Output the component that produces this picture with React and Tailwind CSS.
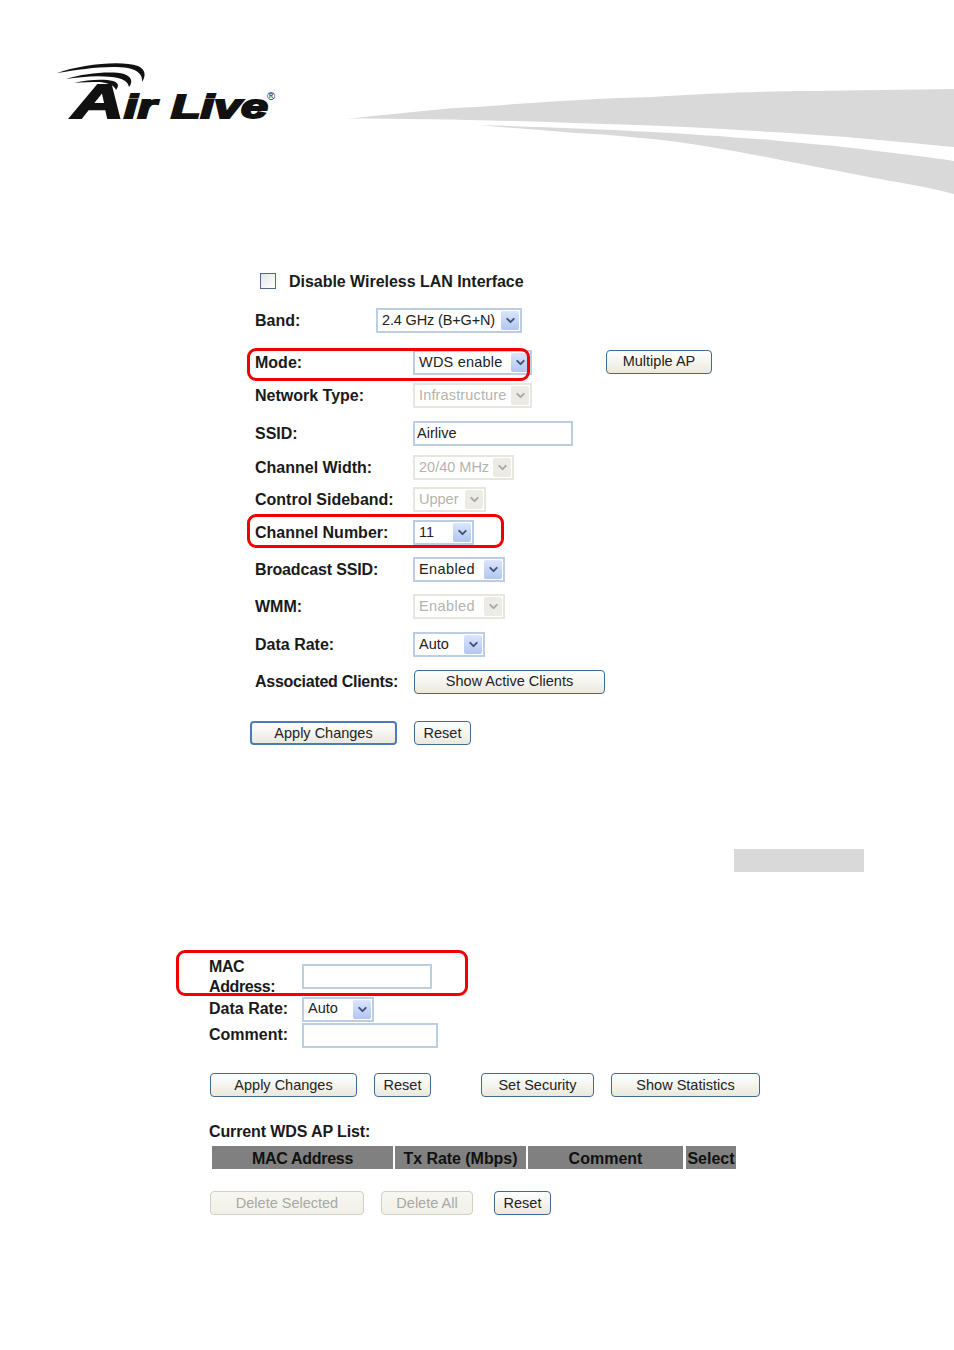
import { ChevronDown } from 'lucide-react';

const FONT = "font-['Liberation_Sans',Arial,sans-serif]";

function Logo() {
  return (
    <svg width="232" height="76" viewBox="52 60 232 76" className="ml-[52px] mt-[60px] shrink-0">
      {/* signal arcs */}
      <path d="M57 73 C 80 65 120 60 138 66 C 146 70 146 76 142 82 C 143 75 138 70 128 68 C 108 65 82 69 57 73 Z" fill="#111" />
      <path d="M66 79 C 85 73 112 71 124 74 C 132 77 133 82 129 87 C 128 81 122 78 112 77 C 96 75 80 77 66 79 Z" fill="#111" />
      <path d="M74 83 C 90 79 105 79 113 81 C 119 83 119 86 116 90 C 114 85 108 83 100 82 C 91 82 82 82 74 83 Z" fill="#111" />
      <text x="72" y="118" textLength="196" lengthAdjust="spacingAndGlyphs" fill="#111" stroke="#111" strokeWidth="2" fontFamily="Liberation Sans" fontWeight="700" fontStyle="italic">
        <tspan fontSize="49">A</tspan>
        <tspan fontSize="33">ir</tspan>
        <tspan fontSize="33" dx="10">Live</tspan>
      </text>
      <text x="267" y="100" fontSize="11" fill="#111" fontFamily="Liberation Sans">®</text>
    </svg>
  );
}

function Swoosh() {
  return (
    <svg width="607" height="110" viewBox="347 86 607 110" className="ml-[63px] mt-[86px] shrink-0">
      <path d="M347 118.500 C 400 114 440 108 477 107 C 540 102 600 98 653 97 C 710 93 770 91 810 91 L 954 89 L 954 147 C 880 140 830 135 771 132 C 700 127 640 125 575 123 C 500 120 420 119 347 118.500 Z" fill="#d9d9d9" />
      <path d="M480 125 C 540 127 600 129 653 132 C 690 134 730 137 771 140 C 800 143 840 146 869 150 C 900 154 930 157 954 161 L 954 194 C 925 186 895 182 869 177 C 835 170 800 164 771 158 C 730 150 690 143 653 139 C 620 136 600 134 575 133 C 540 130 510 128 480 125 Z" fill="#d9d9d9" />
    </svg>
  );
}

function Select({ value, width, disabled, textClass = '' }) {
  return (
    <div className={`${width} h-[25px] shrink-0 flex items-center justify-between pl-[4px] pr-px border-2 text-[14.500px] ${disabled ? 'border-[#e6e5de] text-[#b4b4ad]' : 'border-[#bccfe2] text-[#222]'}`}>
      <span className={`whitespace-nowrap ${textClass}`}>{value}</span>
      <span className={`w-[18px] h-[19px] rounded-[2px] flex items-center justify-center ${disabled ? 'bg-[#ecebe5] text-[#a9a9a3]' : 'bg-linear-to-b from-[#dbe5fb] to-[#b3c6f0] text-[#3e5379]'}`}>
        <ChevronDown size={13} strokeWidth={3.500} />
      </span>
    </div>
  );
}

function Button({ children, width, focused, disabled }) {
  let tone = 'border border-[#3f6a96] text-[#222] from-white to-[#ebe9dc]';
  if (focused) tone = 'border-2 border-[#4a7cbd] text-[#222] from-white to-[#ebe9dc]';
  if (disabled) tone = 'border border-[#d2d0c2] text-[#a9a9a2] from-[#f7f6f1] to-[#f1f0e8]';
  return (
    <button className={`${width} h-[24px] shrink-0 rounded-[4px] text-[14.500px] leading-none bg-linear-to-b ${tone}`}>
      {children}
    </button>
  );
}

function Row({ label, labelWidth = 'w-[163px]', labelClass = '', className = '', children }) {
  return (
    <div className={`relative flex items-center h-[25px] ${className}`}>
      <div className={`${labelWidth} pl-[5px] shrink-0 font-bold whitespace-nowrap ${labelClass}`}>{label}</div>
      {children}
    </div>
  );
}

function Ring({ className }) {
  return <div className={`absolute border-[3px] border-[#f00000] rounded-[9px] pointer-events-none ${className}`} />;
}

export default function App() {
  return (
    <div className={`w-[954px] h-[1350px] overflow-hidden bg-white text-[16px] text-[#1a1a1a] ${FONT}`}>
      <header className="flex h-[269px]">
        <Logo />
        <Swoosh />
      </header>

      {/* Wireless settings */}
      <section className="pl-[250px]">
        <div className="flex items-center h-[25px] pl-[10px] gap-[13px]">
          <span className="w-[16px] h-[16px] -mt-px border border-[#4f6a8a] bg-linear-to-br from-[#e6e6e0] to-white" />
          <span className="font-bold tracking-[-0.03px]">Disable Wireless LAN Interface</span>
        </div>
        <Row label="Band:" labelWidth="w-[126px]" className="mt-[14px]"><Select value="2.4 GHz (B+G+N)" width="w-[146px]" textClass="tracking-[-0.15px]" /></Row>
        <Row label="Mode:" className="mt-[17px]">
          <Select value="WDS enable" width="w-[119px]" textClass="tracking-[0.2px]" />
          <Button width="w-[106px] ml-[74px] -mt-[2px]">Multiple AP</Button>
          <Ring className="left-[-3px] top-[-2px] w-[283px] h-[33px]" />
        </Row>
        <Row label="Network Type:" className="mt-[8px]"><Select value="Infrastructure" width="w-[119px]" disabled textClass="tracking-[0.15px]" /></Row>
        <Row label="SSID:" className="mt-[13px]">
          <div className="w-[160px] h-[25px] border-2 border-[#bccfe2] pl-[2px] text-[14.500px] leading-[20px] text-[#222]">Airlive</div>
        </Row>
        <Row label="Channel Width:" className="mt-[9px]"><Select value="20/40 MHz" width="w-[101px]" disabled /></Row>
        <Row label="Control Sideband:" className="mt-[7px]"><Select value="Upper" width="w-[73px]" disabled /></Row>
        <Row label="Channel Number:" className="mt-[8px]">
          <Select value="11" width="w-[61px]" />
          <Ring className="left-[-3px] top-[-6px] w-[257px] h-[34px]" />
        </Row>
        <Row label="Broadcast SSID:" labelClass="tracking-[-0.15px]" className="mt-[12px]"><Select value="Enabled" width="w-[92px]" textClass="tracking-[0.4px]" /></Row>
        <Row label="WMM:" className="mt-[12px]"><Select value="Enabled" width="w-[92px]" disabled textClass="tracking-[0.4px]" /></Row>
        <Row label="Data Rate:" className="mt-[13px]"><Select value="Auto" width="w-[72px]" /></Row>
        <Row label="Associated Clients:" labelClass="tracking-[-0.28px]" className="mt-[12px]"><Button width="w-[191px] ml-[1px]">Show Active Clients</Button></Row>
        <div className="flex gap-[17px] mt-[27px]">
          <Button width="w-[147px]" focused>Apply Changes</Button>
          <Button width="w-[57px]">Reset</Button>
        </div>
      </section>

      <div className="flex justify-end mt-[104px] pr-[90px]">
        <div className="w-[130px] h-[23px] bg-[#d9d9d9]" />
      </div>

      {/* WDS AP list */}
      <section className="pl-[209px] mt-[85px]">
        <div className="relative flex items-center h-[40px]">
          <div className="w-[93px] font-bold leading-[20px] tracking-[-0.4px]">MAC Address:</div>
          <div className="w-[130px] h-[25px] -mt-[1px] border-2 border-[#bccfe2]" />
          <Ring className="left-[-33px] top-[-7px] w-[292px] h-[46px]" />
        </div>
        <div className="flex items-center h-[25px]">
          <div className="w-[93px] font-bold -mt-px">Data Rate:</div>
          <Select value="Auto" width="w-[72px]" textClass="-mt-px" />
        </div>
        <div className="flex items-center h-[25px] mt-[1px]">
          <div className="w-[93px] font-bold -mt-px">Comment:</div>
          <div className="w-[136px] h-[25px] -mt-[1px] border-2 border-[#bccfe2]" />
        </div>
        <div className="flex mt-[25px] ml-[1px]">
          <Button width="w-[147px]">Apply Changes</Button>
          <Button width="w-[57px] ml-[17px]">Reset</Button>
          <Button width="w-[113px] ml-[50px]">Set Security</Button>
          <Button width="w-[149px] ml-[17px]">Show Statistics</Button>
        </div>
        <div className="font-bold leading-[20px] mt-[25px] tracking-[-0.12px]">Current WDS AP List:</div>
        <div className="flex gap-[2px] ml-[3px] mt-[4px] h-[23px] font-bold leading-[25px] text-center text-[#111] whitespace-nowrap">
          <div className="w-[181px] bg-[#808080] tracking-[-0.3px]">MAC Address</div>
          <div className="w-[131px] bg-[#808080] tracking-[-0.05px]">Tx Rate (Mbps)</div>
          <div className="w-[155px] bg-[#808080]">Comment</div>
          <div className="w-[50px] ml-[1px] bg-[#808080]">Select</div>
        </div>
        <div className="flex mt-[22px] ml-[1px]">
          <Button width="w-[154px]" disabled>Delete Selected</Button>
          <Button width="w-[92px] ml-[17px]" disabled>Delete All</Button>
          <Button width="w-[57px] ml-[21px]">Reset</Button>
        </div>
      </section>
    </div>
  );
}
